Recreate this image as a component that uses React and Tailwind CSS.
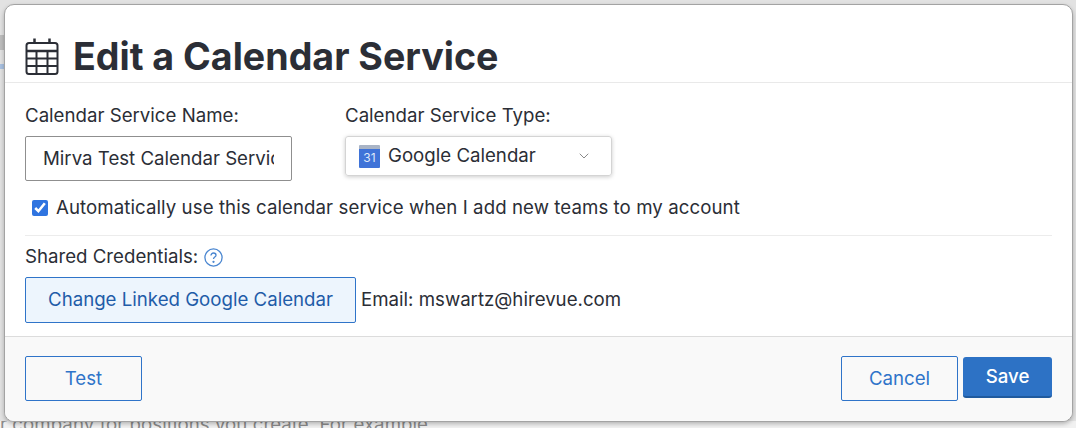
import React from 'react';
import { ChevronDown } from 'lucide-react';

const CalendarIcon = () => (
  <svg width="34" height="37" viewBox="0 0 34 37" fill="none" stroke="#2b2e36" strokeWidth="2" className="mb-[4px]">
    <rect x="1.5" y="5" width="31" height="31" rx="2.5" />
    <path d="M9.5 0.5v5M24.5 0.5v5" strokeWidth="2.5" />
    <path d="M1.5 13h31" strokeWidth="2.5" />
    <path d="M1.5 20.5h31M1.5 28h31M11.5 13v23M22.5 13v23" />
  </svg>
);

const GoogleCalendarIcon = () => (
  <div className="flex h-[23px] w-[21px] flex-col overflow-hidden rounded-[1px]">
    <div className="h-[4px] bg-[#a9b4c6]" />
    <div className="flex flex-1 items-center justify-center bg-[#3f73d8] text-[12px] leading-none text-[#dfe8fa]">31</div>
  </div>
);

const HelpIcon = () => (
  <svg width="19" height="19" viewBox="0 0 19 19" fill="none" stroke="#4a86d0" strokeWidth="1.3">
    <circle cx="9.5" cy="9.5" r="8.6" />
    <path d="M7 7.4c0-1.5 1.1-2.4 2.5-2.4s2.5.9 2.5 2.2c0 1.9-2.5 1.9-2.5 3.8" />
    <circle cx="9.5" cy="13.8" r=".5" fill="#4a86d0" />
  </svg>
);

export default function App() {
  return (
    <div className="relative h-[428px] w-[1076px] overflow-hidden bg-white font-['Inter',sans-serif] text-[18.67px] text-[#2b2e36]">
      <div className="h-[421px] bg-[#e2e2e2] pt-[35px]">
        <div className="h-[15px] w-[5px] bg-[#bdbdbd]" />
        <div className="mt-[14px] h-[5px] w-[5px] bg-[#a9c1e0]" />
      </div>
      <div className="h-[7px] overflow-hidden whitespace-nowrap bg-[#f1f1f1] text-[18.67px] leading-[7px] tracking-[0.05px] text-[#8b8b8b]">
        r company for positions you create. For example,
      </div>

      <div className="absolute left-[4px] top-[4px] flex h-[418px] w-[1069px] flex-col overflow-hidden rounded-[10px] border border-[#a3a3a3] bg-white shadow-[0_2px_4px_rgba(0,0,0,0.25)]">
        <div className="flex h-[78px] items-end gap-[14px] border-b border-[#e9e9e9] pb-[3px] pl-[20px]">
          <CalendarIcon />
          <h1 className="text-[37.6px] font-bold leading-[44px]">Edit a Calendar Service</h1>
        </div>

        <div className="flex-1 px-[20px]">
          <div className="mt-[22px] flex gap-[53px]">
            <div className="flex flex-col gap-[9px]">
              <label className="leading-[22px]">Calendar Service Name:</label>
              <div className="flex h-[45px] w-[267px] items-center overflow-hidden rounded-[2px] border border-[#8f8f8f] px-[17px]">
                <span className="overflow-hidden whitespace-nowrap">Mirva Test Calendar Service</span>
              </div>
            </div>
            <div className="flex flex-col gap-[9px]">
              <label className="leading-[22px]">Calendar Service Type:</label>
              <div className="flex h-[40px] w-[267px] items-center rounded-[3px] border border-[#d4d4d4] pl-[13px] shadow-[0_1px_4px_rgba(0,0,0,0.2)]">
                <GoogleCalendarIcon />
                <span className="ml-[8px]">Google Calendar</span>
                <ChevronDown className="ml-[40px] h-[16px] w-[16px] text-[#8a8a8a]" strokeWidth={1.5} />
              </div>
            </div>
          </div>

          <label className="ml-[7px] mt-[14px] flex h-[26px] items-center gap-[8px] tracking-[0.07px]">
            <input type="checkbox" defaultChecked className="h-[16px] w-[16px] accent-[#2f74e0]" />
            Automatically use this calendar service when I add new teams to my account
          </label>

          <div className="mt-[14px] border-t border-[#ececec] pt-[9px]">
            <div className="flex items-center gap-[6px] leading-[24px]">
              Shared Credentials: <HelpIcon />
            </div>
            <div className="mt-[8px] flex items-center gap-[5px]">
              <button className="h-[46px] w-[331px] rounded-[2px] border border-[#2f74c9] bg-[#edf5fd] text-[#1f5ca8]">Change Linked Google Calendar</button>
              <span>Email: mswartz@hirevue.com</span>
            </div>
          </div>
        </div>

        <div className="flex h-[85px] items-start justify-between border-t border-[#dcdcdc] bg-[#f9f9f9] px-[20px] pt-[19px]">
          <button className="h-[45px] w-[117px] rounded-[2px] border border-[#2f74c9] text-[#2f74c9]">Test</button>
          <div className="flex items-start gap-[5px]">
            <button className="h-[45px] w-[117px] rounded-[2px] border border-[#2f74c9] text-[#2f74c9]">Cancel</button>
            <button className="mt-[1px] h-[41px] w-[89px] rounded-[3px] border-b-2 border-[#1f5a9e] bg-[#2d72c5] font-medium text-white">Save</button>
          </div>
        </div>
      </div>
    </div>
  );
}
